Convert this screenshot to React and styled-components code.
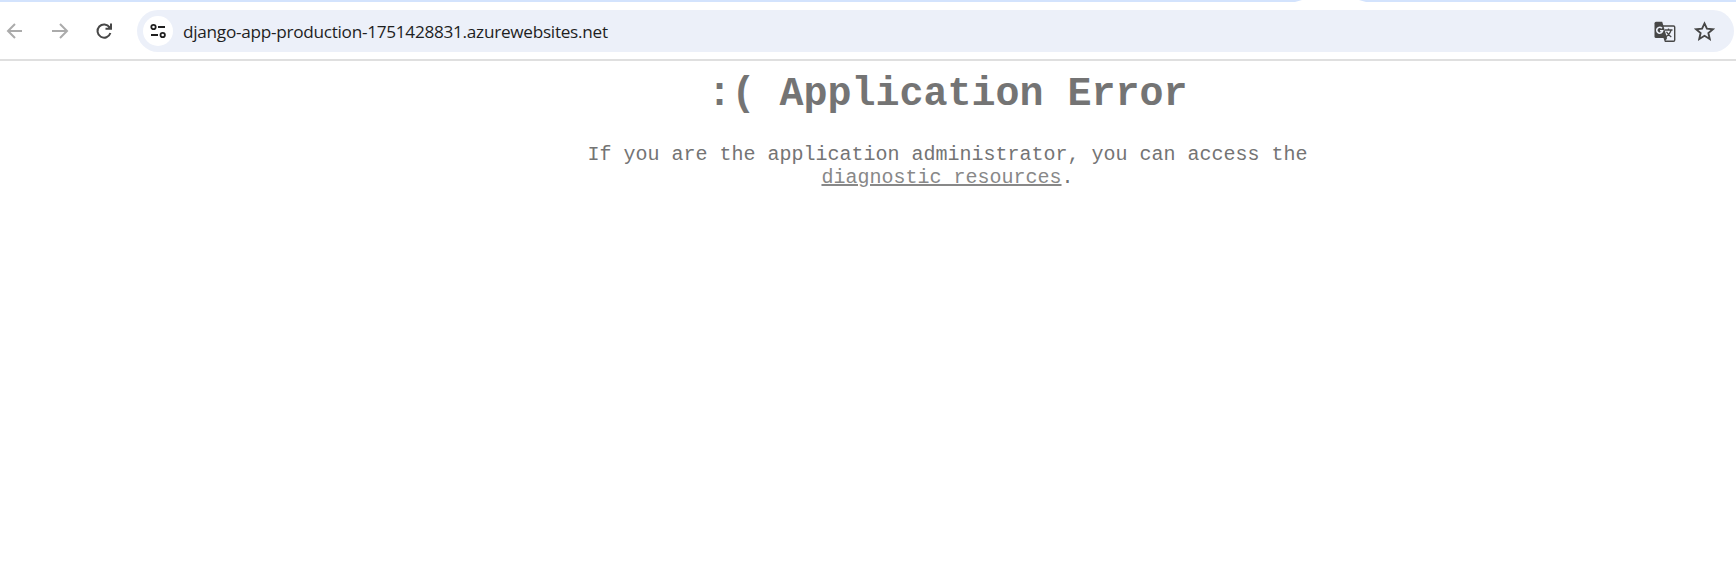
import React from "react";
import styled, { createGlobalStyle } from "styled-components";

const GlobalStyle = createGlobalStyle`
  * { box-sizing: border-box; }
  body { margin: 0; background: #fff; overflow: hidden; }
`;

const Browser = styled.div`
  height: 570px;
  overflow: hidden;
  background: #fff;
`;

const TabStrip = styled.div`
  display: flex;
  justify-content: space-between;
  height: 2px;
`;

const TabStripPart = styled.div`
  width: ${(p) => p.$width}px;
  background: #d3e3fd;
  clip-path: ${(p) =>
    p.$end
      ? "polygon(0 0, 100% 0, 100% 100%, 7px 100%)"
      : "polygon(0 0, 100% 0, calc(100% - 7px) 100%, 0 100%)"};
`;

const Toolbar = styled.header`
  display: flex;
  align-items: center;
  height: 59px;
  padding: 0 2px 0 5px;
  border-bottom: 2px solid #dfdfdf;
`;

const NavButtons = styled.nav`
  display: flex;
  gap: 24.5px;
  width: 132px;
`;

const IconButton = styled.button`
  display: flex;
  padding: 0;
  border: 0;
  background: none;
  color: ${(p) => (p.$muted ? "#ababab" : "#474747")};
  svg { display: block; }
`;

const AddressBar = styled.div`
  display: flex;
  align-items: center;
  flex: 1;
  height: 42px;
  margin-top: 1px;
  padding: 0 19px 0 6px;
  border-radius: 21px;
  background: #ecf0f9;
`;

const SiteInfo = styled.button`
  display: flex;
  align-items: center;
  justify-content: center;
  width: 30px;
  height: 30px;
  padding: 0;
  border: 0;
  border-radius: 50%;
  background: #fff;
  color: #1f1f1f;
`;

const Address = styled.span`
  flex: 1;
  margin-left: 10px;
  padding-top: 2px;
  color: #1f1f1f;
  font: 17.2px/24px "Open Sans", "Noto Sans", sans-serif;
  letter-spacing: -0.28px;
  white-space: nowrap;
`;

const Actions = styled.div`
  display: flex;
  align-items: center;
  gap: 18px;
  padding-top: 1px;
`;

const Page = styled.main`
  padding: 11px 0 0 159px;
  color: #747474;
  font-family: "Liberation Mono", "Courier New", monospace;
  text-align: center;
`;

const Title = styled.h1`
  margin: 0;
  font-size: 40px;
  line-height: 46px;
`;

const Message = styled.p`
  width: 750px;
  margin: 25px auto 0;
  font-size: 20px;
  line-height: 23px;
`;

const ResourceLink = styled.a`
  color: #888;
  text-decoration: underline;
  text-decoration-thickness: 2px;
`;

const Arrow = ({ flip }) => (
  <svg width="20" height="20" viewBox="0 0 20 20" fill="none" stroke="currentColor" strokeWidth="2">
    <path d={flip ? "M2 10H16M10 3L17 10L10 17" : "M17 10H3M10 3L3 10L10 17"} />
  </svg>
);

const Reload = () => (
  <svg width="20" height="20" viewBox="0 0 20 20" fill="none" stroke="currentColor" strokeWidth="2">
    <path d="M15.6 6.4A6.6 6.6 0 1 0 16.4 12" />
    <path d="M17 2.5V7.8H11.5" />
    <path d="M17 4V7.8H13Z" fill="currentColor" stroke="none" />
  </svg>
);

const Tune = () => (
  <svg width="18" height="18" viewBox="0 0 18 18" fill="none" stroke="currentColor" strokeWidth="1.8">
    <circle cx="4.5" cy="5" r="2.2" />
    <path d="M9 5H16M2 13H9" />
    <circle cx="13.7" cy="13" r="2.2" />
  </svg>
);

const Translate = () => (
  <svg width="22" height="22" viewBox="0 0 22 22" fill="none">
    <path d="M9 5H19.5Q20.7 5 20.7 6V19Q20.7 20.3 19.5 20.3H11" stroke="#474747" strokeWidth="1.4" />
    <path d="M2 .7H8.2L13 17H2Q.5 17 .5 15.5V2.2Q.5 .7 2 .7Z" fill="#474747" />
    <path d="M9.5 17H13.2L10.8 21Z" fill="#474747" />
    <path d="M8 7.2A3 3 0 1 0 8.7 9.7H6" stroke="#ecf0f9" strokeWidth="1.6" />
    <path d="M10.8 9H18.5M14.5 7.4V9M17 9Q16 13.5 11.6 15.8M12.5 10.8Q14 14 17.3 16" stroke="#474747" strokeWidth="1.3" />
  </svg>
);

const Star = () => (
  <svg width="21" height="21" viewBox="0 0 20 20" fill="none" stroke="#474747" strokeWidth="1.8">
    <path d="M10 2.3L12.3 7.3L18 7.8L13.7 11.5L15 17.1L10 14.1L5 17.1L6.3 11.5L2 7.8L7.7 7.3Z" />
  </svg>
);

export default function App() {
  return (
    <Browser>
      <GlobalStyle />
      <TabStrip>
        <TabStripPart $width={1302} />
        <TabStripPart $width={377} $end />
      </TabStrip>
      <Toolbar>
        <NavButtons>
          <IconButton $muted aria-label="Back"><Arrow /></IconButton>
          <IconButton $muted aria-label="Forward"><Arrow flip /></IconButton>
          <IconButton aria-label="Reload"><Reload /></IconButton>
        </NavButtons>
        <AddressBar>
          <SiteInfo aria-label="Site information"><Tune /></SiteInfo>
          <Address>django-app-production-1751428831.azurewebsites.net</Address>
          <Actions>
            <IconButton aria-label="Translate"><Translate /></IconButton>
            <IconButton aria-label="Bookmark"><Star /></IconButton>
          </Actions>
        </AddressBar>
      </Toolbar>
      <Page>
        <Title>:( Application Error</Title>
        <Message>
          If you are the application administrator, you can access the{" "}
          <ResourceLink>diagnostic resources</ResourceLink>.
        </Message>
      </Page>
    </Browser>
  );
}
